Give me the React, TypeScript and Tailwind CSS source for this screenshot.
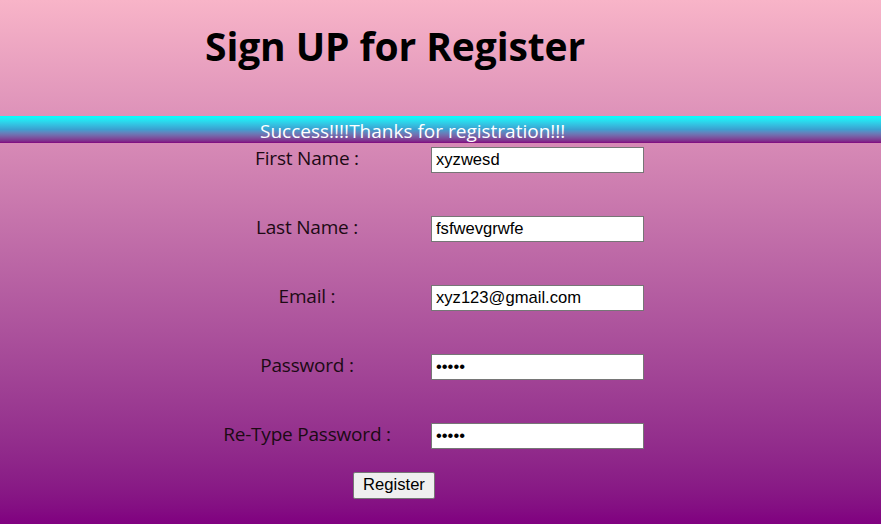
import React from "react";

const rows = [
  { label: "First Name :", value: "xyzwesd", type: "text" },
  { label: "Last Name :", value: "fsfwevgrwfe", type: "text" },
  { label: "Email :", value: "xyz123@gmail.com", type: "text" },
  { label: "Password :", value: "abcde", type: "password" },
  { label: "Re-Type Password :", value: "abcde", type: "password" },
];

export default function App() {
  return (
    <div className="w-[881px] h-[524px] overflow-hidden bg-gradient-to-b from-[#f8b4c8] to-[#800080] font-['Open_Sans','Noto_Sans',sans-serif]">
      <div className="h-[116px] pl-[205px] pt-[19px]">
        <h1 className="text-[39px] font-bold leading-[54px] text-black tracking-[-0.1px]">Sign UP for Register</h1>
      </div>
      <div className="h-[27px] bg-gradient-to-b from-[#00ffff] via-[#3aa0d0] to-[#800080] pl-[260px]">
        <span className="text-white text-[19px] leading-[30px]">Success!!!!Thanks for registration!!!</span>
      </div>
      <div className="flex flex-col pt-[3px]">
        {rows.map((r) => (
          <div key={r.label} className="flex h-[69px] items-start">
            <div className="w-[200px] ml-[207px] text-center text-[19px] leading-[24px] text-[#1c0a14] tracking-[-0.2px]">{r.label}</div>
            <input
              readOnly
              type={r.type}
              value={r.value}
              className="ml-[24px] mt-[1px] w-[213px] h-[26px] bg-white border border-[#767676] px-[4px] text-[16.6px] text-black font-['Liberation_Sans',Arial,sans-serif] outline-none"
            />
          </div>
        ))}
      </div>
      <div className="pl-[353px] -mt-[19px]">
        <button className="w-[82px] h-[27px] bg-[#efefef] border border-[#767676] rounded-[2px] text-[16.6px] text-black font-['Liberation_Sans',Arial,sans-serif]">Register</button>
      </div>
    </div>
  );
}
